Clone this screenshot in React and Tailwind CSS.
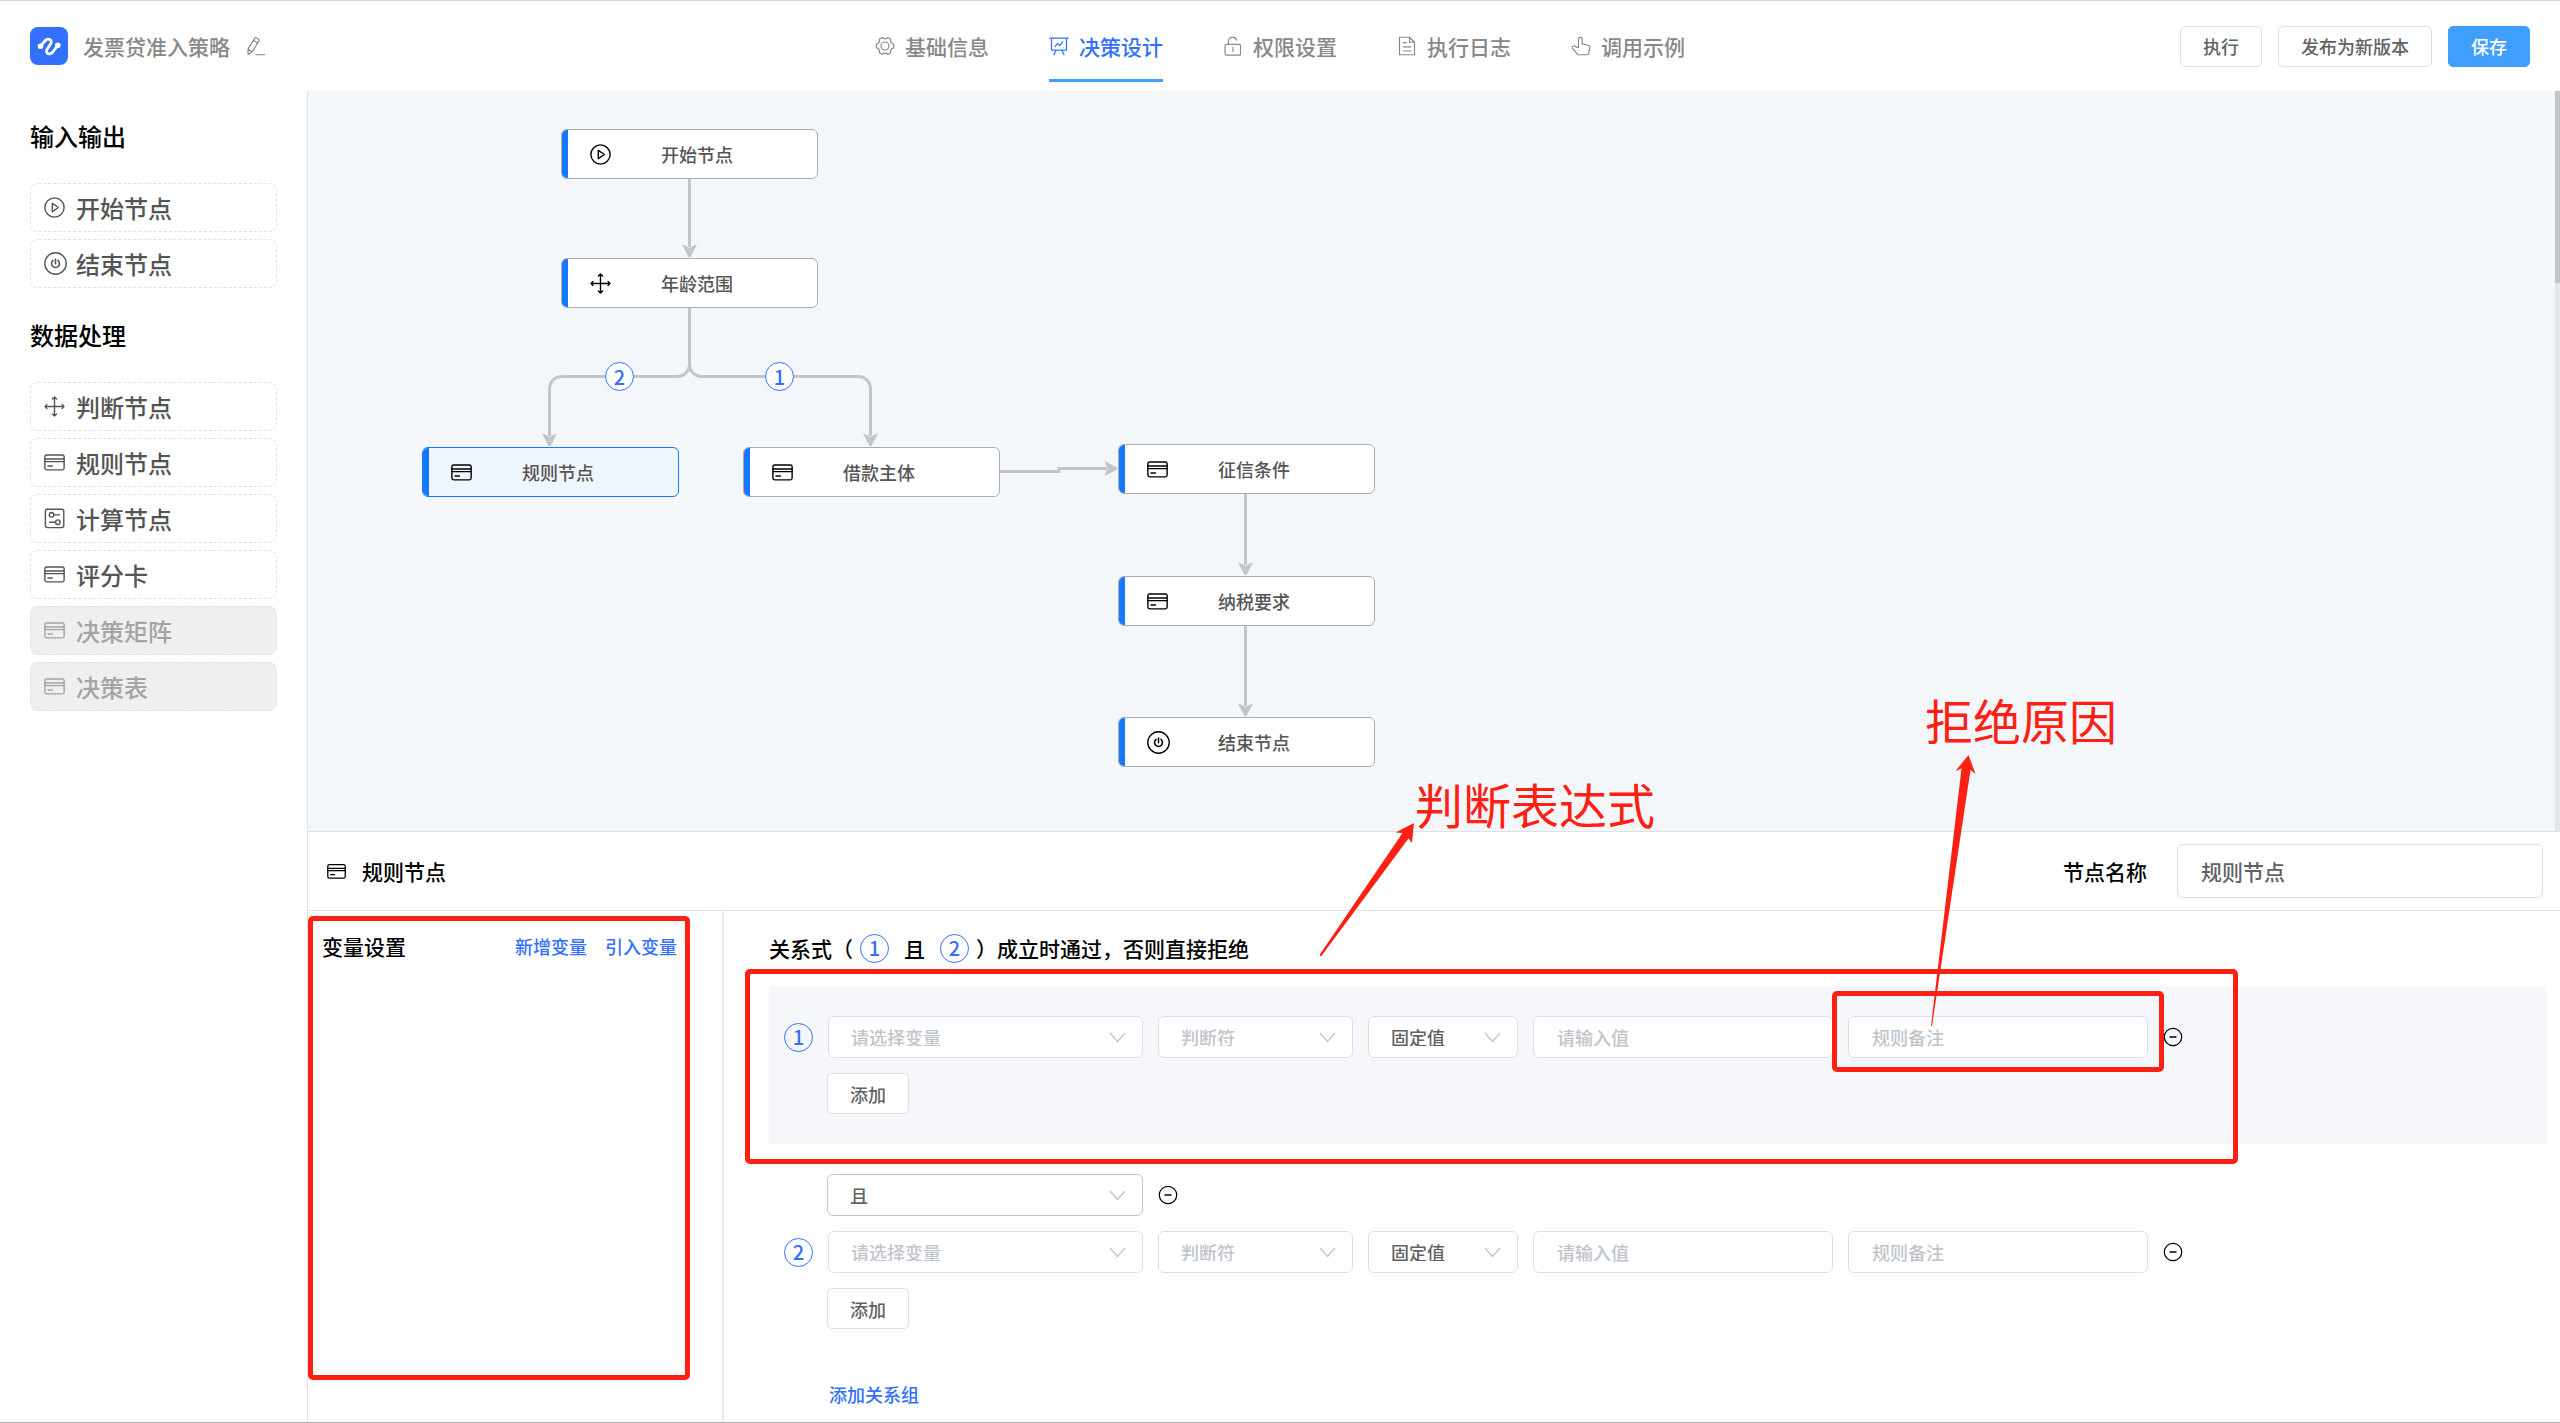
import React from "react";

function Svg({ className, size = 21, children }) {
  return (
    <svg
      className={className}
      width={size}
      height={size}
      viewBox="0 0 24 24"
      fill="none"
      stroke="currentColor"
      strokeWidth="1.6"
      strokeLinecap="round"
      strokeLinejoin="round"
      aria-hidden="true"
    >
      {children}
    </svg>
  );
}

const PlayIcon = (p) => (
  <Svg {...p}>
    <circle cx="12" cy="12" r="11" />
    <path d="M9.5 7.2v9.6l7-4.8z" />
  </Svg>
);

const PowerIcon = (p) => (
  <Svg {...p} size={23}>
    <circle cx="12" cy="12" r="11.2" strokeWidth="1.4" />
    <path d="M12 7.2v5M9.4 8.8a4.1 4.1 0 1 0 5.2 0" />
  </Svg>
);

const MoveIcon = (p) => (
  <Svg {...p}>
    <path d="M12 1.2v21.6M1.2 12h21.6M9.6 3.4L12 1.2l2.4 2.2M9.6 20.6l2.4 2.2 2.4-2.2M3.4 9.6L1.2 12l2.2 2.4M20.6 9.6l2.2 2.4-2.2 2.4" />
  </Svg>
);

const CardIcon = (p) => (
  <Svg {...p}>
    <rect x="1" y="3.4" width="22" height="17" rx="2" />
    <path d="M1 8h22M1 11h22M4.6 16h5" />
  </Svg>
);

const CalcIcon = (p) => (
  <Svg {...p}>
    <rect x="1.6" y="1.4" width="21" height="21" rx="2.4" />
    <circle cx="8.6" cy="7.8" r="2.6" />
    <path d="M11.4 7.8h6.4" />
    <circle cx="15.8" cy="16.2" r="2.6" />
    <path d="M6.4 16.2H13" />
  </Svg>
);

const MinusIcon = () => (
  <svg width="20" height="20" viewBox="0 0 20 20" fill="none" stroke="currentColor" aria-hidden="true">
    <circle cx="10" cy="10" r="8.7" strokeWidth="1.2" />
    <path d="M6.5 10h7" strokeWidth="1.5" />
  </svg>
);

const GearIcon = () => (
  <Svg size={20} className="shrink-0">
    <path
      strokeWidth="1.4"
      d="M8.6 1.8l1.8 1.4h3.2l1.8-1.4 3.4 2-.3 2.4 1.6 2.6 2.3 1v4.400l-2.300 1-1.600 2.600.3 2.400-3.400 2-1.800-1.400h-3.200l-1.800 1.400-3.400-2 .3-2.400-1.600-2.600-2.300-1V9.800l2.300-1 1.600-2.600-.3-2.400z"
    />
    <circle cx="12" cy="12" r="4.800" strokeWidth="1.400" />
  </Svg>
);

const BoardIcon = () => (
  <Svg size={20} className="shrink-0">
    <path strokeWidth="1.500" d="M1 2.500h22M3 2.500v14.500h18V2.500M8.500 17l-2.500 5.500M15.500 17l2.500 5.500M7.500 12.500l2.500-3.500 3 2.500 3.500-4.500" />
  </Svg>
);

const LockIcon = () => (
  <Svg size={20} className="shrink-0">
    <rect x="2.500" y="10" width="18.500" height="13" rx="1.500" strokeWidth="1.400" />
    <path strokeWidth="1.400" d="M6.500 10V6.500a5 5 0 0 1 9.800-1.500M12 13.500v5" />
  </Svg>
);

const DocIcon = () => (
  <Svg size={20} className="shrink-0">
    <path strokeWidth="1.400" d="M3 1.500h12l6 6v15H3zM15 1.500v6h6M7.500 8h3.500M7.500 13h9M7.500 18h9" />
  </Svg>
);

const HandIcon = () => (
  <Svg size={20} className="shrink-0">
    <path
      strokeWidth="1.400"
      d="M9 14V3.800a2.200 2.200 0 0 1 4.400 0V9.500l7 1.600c1.500.4 2.300 1.400 2.100 3l-1 6.200c-.2 1.400-1.200 2.200-2.500 2.200H9.500c-1 0-1.700-.3-2.300-1.100L1.800 14.500c-.6-1 .1-2.300 1.300-2.500 1-.2 1.800.1 2.500.8z"
    />
  </Svg>
);

const PencilIcon = () => (
  <Svg size={20}>
    <path strokeWidth="1.400" d="M2.500 15.500L10.500 2.500c.4-.6 1.100-.8 1.700-.5l3 1.800c.6.4.8 1.100.4 1.700L7.800 18.700l-5.300 3.500zM9 5.200l5.200 3.100M2.600 16l5 2.800M12 22.500h10.500" />
  </Svg>
);

const Logo = () => (
  <span className="flex size-[38px] shrink-0 items-center justify-center rounded-lg bg-[#3370ff]">
    <svg width="38" height="38" viewBox="0 0 38 38" fill="none" aria-hidden="true">
      <path
        d="M10.500 19L15.300 13.500C18 10.500 22.800 13 20.800 16.500L17 22.500C15 26 19.500 28.500 22.500 25.300L27.800 18.500"
        stroke="#fff"
        strokeWidth="2.800"
        strokeLinecap="round"
      />
      <circle cx="10.500" cy="19.300" r="2.800" fill="#fff" />
      <circle cx="27.800" cy="18.200" r="2.800" fill="#fff" />
    </svg>
  </span>
);

const tabs = [
  { label: "基础信息", Icon: GearIcon },
  { label: "决策设计", Icon: BoardIcon, active: true },
  { label: "权限设置", Icon: LockIcon },
  { label: "执行日志", Icon: DocIcon },
  { label: "调用示例", Icon: HandIcon },
];

function Header() {
  const plain =
    "h-[41px] rounded-[5px] border border-[#dcdfe6] bg-white px-[22px] text-lg leading-none font-medium text-[#606266]";
  return (
    <header className="grid h-[91px] grid-cols-[1fr_auto_1fr] items-center border-t border-[#d9d9d9] bg-white px-[30px]">
      <div className="flex items-center">
        <Logo />
        <h1 className="ml-[15px] text-[21px] leading-[30px] font-medium text-[#888]">发票贷准入策略</h1>
        <button type="button" aria-label="编辑名称" className="ml-4 text-[#888]">
          <PencilIcon />
        </button>
      </div>
      <nav className="flex h-[90px] gap-[60px]">
        {tabs.map(({ label, Icon, active }) => (
          <a
            key={label}
            href="#"
            className={
              active
                ? "flex h-[81px] items-center gap-[10px] border-b-3 border-[#409eff] pt-[12px] text-[#3370ff]"
                : "flex h-[81px] items-center gap-[10px] border-b-3 border-transparent pt-[12px] text-[#888]"
            }
          >
            <Icon />
            <span className="text-[21px] leading-[30px] font-medium">{label}</span>
          </a>
        ))}
      </nav>
      <div className="flex justify-end gap-4">
        <button type="button" className={plain}>执行</button>
        <button type="button" className={plain}>发布为新版本</button>
        <button
          type="button"
          className="h-[41px] rounded-[5px] border border-[#409eff] bg-[#409eff] px-[22px] text-lg leading-none font-medium text-white"
        >
          保存
        </button>
      </div>
    </header>
  );
}

const palette = [
  {
    title: "输入输出",
    items: [
      { label: "开始节点", Icon: PlayIcon },
      { label: "结束节点", Icon: PowerIcon },
    ],
  },
  {
    title: "数据处理",
    items: [
      { label: "判断节点", Icon: MoveIcon },
      { label: "规则节点", Icon: CardIcon },
      { label: "计算节点", Icon: CalcIcon },
      { label: "评分卡", Icon: CardIcon },
      { label: "决策矩阵", Icon: CardIcon, disabled: true },
      { label: "决策表", Icon: CardIcon, disabled: true },
    ],
  },
];

function Sidebar() {
  return (
    <aside className="flex w-[308px] shrink-0 flex-col gap-[29px] border-r border-[#dbe2ea] bg-white px-[30px] pt-[27px]">
      {palette.map(({ title, items }) => (
        <section key={title}>
          <h2 className="text-2xl leading-9 font-medium text-black">{title}</h2>
          <div className="mt-[29px] flex flex-col gap-[7px]">
            {items.map(({ label, Icon, disabled }) => (
              <button
                key={label}
                type="button"
                disabled={disabled}
                className={
                  disabled
                    ? "flex h-[49px] items-center rounded-lg border border-dashed border-[#e0e1e5] bg-[#efefef] pl-[13px] text-[#a3a3a3]"
                    : "flex h-[49px] items-center rounded-lg border border-dashed border-[#e0e1e5] bg-white pl-[13px] text-[#555]"
                }
              >
                <span className="flex w-8 shrink-0">
                  <Icon />
                </span>
                <span className="text-2xl leading-9 font-medium">{label}</span>
              </button>
            ))}
          </div>
        </section>
      ))}
    </aside>
  );
}

/* Positions on the flow canvas, in canvas pixels. */
const nodes = [
  { label: "开始节点", Icon: PlayIcon, x: 253, y: 38 },
  { label: "年龄范围", Icon: MoveIcon, x: 253, y: 167 },
  { label: "规则节点", Icon: CardIcon, x: 114, y: 356, selected: true },
  { label: "借款主体", Icon: CardIcon, x: 435, y: 356 },
  { label: "征信条件", Icon: CardIcon, x: 810, y: 353 },
  { label: "纳税要求", Icon: CardIcon, x: 810, y: 485 },
  { label: "结束节点", Icon: PowerIcon, x: 810, y: 626 },
];

const edges = [
  "M381.5 88V156",
  "M381.5 217V273.500a12 12 0 0 1 -12 12H253.500a12 12 0 0 0 -12 12V345",
  "M381.5 217V273.500a12 12 0 0 0 12 12H550.500a12 12 0 0 1 12 12V345",
  "M692 380.500H751V377.500H799",
  "M937.500 403V474",
  "M937.500 535V615",
];

const arrowHeads = [
  { x: 381.5, y: 166 },
  { x: 241.5, y: 355 },
  { x: 562.5, y: 355 },
  { x: 809, y: 377.5, turn: -90 },
  { x: 937.5, y: 484 },
  { x: 937.5, y: 625 },
];

function Canvas() {
  return (
    <div className="relative h-[740px] bg-[#f3f7fa]">
      <svg className="absolute top-0 left-0" width="1200" height="740" fill="none" aria-hidden="true">
        {edges.map((d) => (
          <path key={d} d={d} stroke="#c2c6ca" strokeWidth="3" />
        ))}
        {arrowHeads.map(({ x, y, turn = 0 }) => (
          <path
            key={`${x}-${y}`}
            d="M-1 0L-7.500 -12.500Q-4 -12 0 -9Q4 -12 7.500 -12.500L1 0z"
            fill="#c2c6ca"
            transform={`translate(${x} ${y}) rotate(${turn})`}
          />
        ))}
      </svg>
      {[
        { n: 2, x: 297 },
        { n: 1, x: 457 },
      ].map(({ n, x }) => (
        <span
          key={n}
          style={{ left: x, top: 271 }}
          className="absolute flex size-[29px] items-center justify-center rounded-full border border-[#3370ff] bg-white text-xl leading-none font-medium text-[#3370ff]"
        >
          {n}
        </span>
      ))}
      {nodes.map(({ label, Icon, x, y, selected }) => (
        <button
          key={`${label}-${x}-${y}`}
          type="button"
          style={{ left: x, top: y }}
          className={
            selected
              ? "absolute flex h-[50px] w-[257px] items-center overflow-hidden rounded-md border border-[#1677ff] bg-[#eff6ff] text-black"
              : "absolute flex h-[50px] w-[257px] items-center overflow-hidden rounded-md border border-[#a9adb2] bg-white text-black"
          }
        >
          <span className="h-full w-[6px] shrink-0 bg-[#1677ff]" />
          <span className="ml-[22px] flex w-[71px] shrink-0">
            <Icon />
          </span>
          <span className="text-lg leading-6 font-medium text-[#555]">{label}</span>
        </button>
      ))}
      <div className="absolute top-0 right-0 h-full w-[5px] bg-[#e4e6e9]">
        <div className="h-[192px] bg-[#c1c4c8]" />
      </div>
      <p className="absolute top-[676px] left-[1107px] text-[48px] leading-[72px] text-[#ff2014]">判断表达式</p>
      <p className="absolute top-[592px] left-[1617px] text-[48px] leading-[72px] text-[#ff2014]">拒绝原因</p>
    </div>
  );
}

function NumberBadge({ children }) {
  return (
    <span className="flex size-[29px] shrink-0 items-center justify-center rounded-full border border-[#3370ff] text-xl leading-none font-medium text-[#3370ff]">
      {children}
    </span>
  );
}

function Select({ label, value, width, muted, strong }) {
  return (
    <span className={`relative flex shrink-0 ${width}`}>
      <select
        aria-label={label}
        className={`h-[42px] w-full appearance-none rounded-md border bg-white px-[22px] text-lg leading-none font-medium ${
          strong ? "border-[#c0c4cc]" : "border-[#dcdfe6]"
        } ${muted ? "text-[#c0c4cc]" : "text-[#606266]"}`}
      >
        <option>{value}</option>
      </select>
      <svg
        className="pointer-events-none absolute top-[16px] right-[17px] text-[#c0c4cc]"
        width="17"
        height="11"
        viewBox="0 0 17 11"
        fill="none"
        stroke="currentColor"
        strokeWidth="1.300"
        aria-hidden="true"
      >
        <path d="M1 1l7.500 8.500L16 1" />
      </svg>
    </span>
  );
}

const field =
  "h-[42px] w-[300px] shrink-0 rounded-md border border-[#dcdfe6] bg-white px-[23px] text-lg leading-6 font-medium text-[#606266] placeholder:text-[#c0c4cc]";

function Frame({ className }) {
  return <div className={`pointer-events-none absolute rounded-[5px] border-5 border-[#ff2014] ${className}`} />;
}

function Rule({ n, framed }) {
  return (
    <div className="pl-[15px]">
      <div className="flex items-center gap-[15px]">
        <NumberBadge>{n}</NumberBadge>
        <Select label="变量" value="请选择变量" width="w-[315px]" muted />
        <Select label="判断符" value="判断符" width="w-[195px]" muted />
        <Select label="值类型" value="固定值" width="w-[150px]" />
        <input aria-label="值" placeholder="请输入值" className={field} />
        <span className="relative flex">
          <input aria-label="规则备注" placeholder="规则备注" className={field} />
          {framed && <Frame className="-inset-x-4 -top-[25px] -bottom-[14px]" />}
        </span>
        <button type="button" aria-label="删除规则" className="text-black">
          <MinusIcon />
        </button>
      </div>
      <button
        type="button"
        className="mt-[15px] ml-[43px] flex h-[41px] items-center rounded-[5px] border border-[#dcdfe6] bg-white px-[22px] text-lg leading-none font-medium text-[#606266]"
      >
        添加
      </button>
    </div>
  );
}

function RulePanel() {
  return (
    <section className="flex flex-1 flex-col border-t border-[#dce2e8] bg-white">
      <div className="flex h-[79px] shrink-0 items-center border-b border-[#dce2e8] pr-[17px] pl-[19px]">
        <CardIcon size={19} />
        <h2 className="ml-4 text-[21px] leading-[30px] font-medium text-black">规则节点</h2>
        <label htmlFor="node-name" className="ml-auto text-[21px] leading-[30px] font-medium text-black">
          节点名称
        </label>
        <input
          id="node-name"
          defaultValue="规则节点"
          className="ml-[30px] h-[54px] w-[366px] rounded-md border border-[#dcdfe6] px-[23px] text-[21px] leading-[30px] font-medium text-[#606266]"
        />
      </div>
      <div className="flex flex-1">
        <div className="relative w-[416px] shrink-0 border-r-2 border-[#ebecf0]">
          <div className="flex items-center gap-[18px] pt-5 pr-[45px] pl-[14px]">
            <h3 className="mr-auto text-[21px] leading-[30px] font-medium text-black">变量设置</h3>
            <button type="button" className="text-lg leading-6 font-medium text-[#3370ff]">新增变量</button>
            <button type="button" className="text-lg leading-6 font-medium text-[#3370ff]">引入变量</button>
          </div>
          <Frame className="top-[5px] bottom-[42px] left-0 w-[382px]" />
        </div>
        <div className="flex flex-1 flex-col items-stretch pr-[14px] pl-[45px]">
          <p className="flex items-center pt-[22px] text-[21px] leading-[30px] font-medium text-black">
            <span>关系式（</span>
            <span className="mx-[7px]"><NumberBadge>1</NumberBadge></span>
            <span className="mx-2">且</span>
            <span className="mx-[7px]"><NumberBadge>2</NumberBadge></span>
            <span>）成立时通过，否则直接拒绝</span>
          </p>
          <div className="relative mt-[23px] bg-[#f5f7fb] py-[30px]">
            <Rule n={1} framed />
            <Frame className="-top-[17px] -bottom-5 -left-6 w-[1493px]" />
          </div>
          <div className="mt-[30px] flex items-center gap-[15px] pl-[58px]">
            <Select label="关系" value="且" width="w-[316px]" strong />
            <button type="button" aria-label="删除关系" className="text-black">
              <MinusIcon />
            </button>
          </div>
          <div className="mt-[15px]">
            <Rule n={2} />
          </div>
          <button type="button" className="mt-[53px] mb-4 ml-[60px] self-start text-lg leading-6 font-medium text-[#3370ff]">
            添加关系组
          </button>
        </div>
      </div>
    </section>
  );
}

/* Arrows that lead from the form fields to the red notes on the canvas. */
function Arrows() {
  return (
    <svg
      className="pointer-events-none absolute top-0 left-0"
      width="2200"
      height="1040"
      viewBox="0 0 2200 1040"
      fill="#ff2014"
      aria-hidden="true"
    >
      <path d="M1414 823L1395.500 832.500L1402.500 833L1319.500 955L1321 956.500L1408.500 838.500L1412 843z" />
      <path d="M1968.500 755L1955.500 771L1961.500 768.500L1931 1026H1932L1970.500 770L1975.500 774z" />
    </svg>
  );
}

export default function App() {
  return (
    <div className="relative flex min-h-screen flex-col border-b border-[#aab0bb] bg-white font-['Noto_Sans_CJK_SC',sans-serif]">
      <Header />
      <div className="flex flex-1">
        <Sidebar />
        <main className="flex min-w-0 flex-1 flex-col">
          <Canvas />
          <RulePanel />
        </main>
      </div>
      <Arrows />
    </div>
  );
}
